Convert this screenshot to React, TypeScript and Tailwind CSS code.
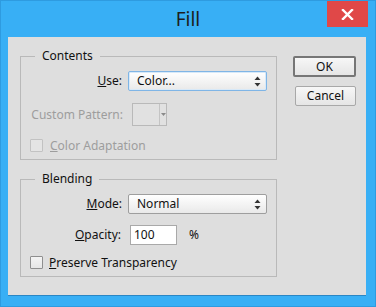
import React from "react";

function Arrows() {
  return (
    <svg width="7" height="11" viewBox="0 0 7 11" className="block">
      <path d="M3.5 0.5 L6.5 4 L0.5 4 Z" fill="#333" />
      <path d="M0.5 7 L6.5 7 L3.5 10.5 Z" fill="#333" />
    </svg>
  );
}

function Select({ text, focused }: { text: string; focused?: boolean }) {
  return (
    <div
      className={
        "w-[139px] h-[20px] rounded-[2px] border flex items-center pl-[8px] pr-[5px] bg-gradient-to-b from-[#ffffff] to-[#e9e9e9] " +
        (focused ? "border-[#7fb5e6] shadow-[inset_0_0_0_1px_#d8e9f8]" : "border-[#9e9e9e]")
      }
    >
      <span className="flex-1 text-[#111] leading-none">{text}</span>
      <Arrows />
    </div>
  );
}

function Legend({ text }: { text: string }) {
  return (
    <span className="absolute left-[14px] top-[-9px] px-[7px] bg-[#dedede] leading-[16px] text-[#111]">
      {text}
    </span>
  );
}

export default function App() {
  return (
    <div className="w-[376px] h-[307px] bg-[#38aff5] border border-[#2e9be0] flex flex-col relative font-['Segoe_UI','Noto_Sans',sans-serif] text-[12px] text-[#111]">
      <div className="h-[36px] flex items-center justify-center">
        <span className="text-[19px] text-[#1d1d1d] leading-none mt-[1px]">Fill</span>
      </div>
      <div className="absolute left-[326px] top-0 w-[41px] h-[26px] bg-[#e04848] flex items-center justify-center">
        <svg width="13" height="11" viewBox="0 0 13 11">
          <path d="M2 1 L11 10 M11 1 L2 10" stroke="#fff" strokeWidth="2.4" strokeLinecap="square" />
        </svg>
      </div>
      <div className="ml-[7px] mr-[9px] h-[259px] bg-[#dedede] border-b border-[#2a86c4] flex pl-[12px] pt-[19px]">
        <div className="w-[257px] flex flex-col gap-[19px]">
          {/* Contents */}
          <div className="relative h-[104px] border border-[#b9b9b9] pt-[14px]">
            <Legend text="Contents" />
            <div className="flex items-center h-[20px]">
              <span className="w-[101px] text-right">
                <span className="underline">U</span>se:
              </span>
              <div className="ml-[6px]">
                <Select text="Color..." focused />
              </div>
            </div>
            <div className="flex items-center h-[23px] mt-[12px]">
              <span className="w-[102px] text-right text-[#9d9d9d]">Custom Pattern:</span>
              <div className="ml-[9px] w-[35px] h-[23px] border border-[#b9b9b9] bg-[#e1e1e1] flex">
                <div className="flex-1" />
                <div className="w-[7px] border-l border-[#c4c4c4] flex items-center justify-center">
                  <svg width="5" height="3" viewBox="0 0 5 3">
                    <path d="M0 0 L5 0 L2.5 3 Z" fill="#8a8a8a" />
                  </svg>
                </div>
              </div>
            </div>
            <div className="flex items-center h-[13px] mt-[13px] pl-[9px]">
              <div className="w-[13px] h-[13px] border border-[#c2c2c2] rounded-[1px] bg-[#e4e4e4]" />
              <span className="ml-[7px] text-[#9d9d9d]">
                <span className="underline">C</span>olor Adaptation
              </span>
            </div>
          </div>
          {/* Blending */}
          <div className="relative h-[98px] border border-[#b9b9b9] pt-[14px]">
            <Legend text="Blending" />
            <div className="flex items-center h-[20px]">
              <span className="w-[101px] text-right">
                <span className="underline">M</span>ode:
              </span>
              <div className="ml-[6px]">
                <Select text="Normal" />
              </div>
            </div>
            <div className="flex items-center h-[20px] mt-[11px]">
              <span className="w-[100px] text-right">
                <span className="underline">O</span>pacity:
              </span>
              <div className="ml-[9px] w-[47px] h-[20px] border border-[#a9a9a9] bg-white flex items-center pl-[3px]">
                100
              </div>
              <span className="ml-[12px]">%</span>
            </div>
            <div className="flex items-center h-[13px] mt-[11px] pl-[9px]">
              <div className="w-[13px] h-[13px] border border-[#8f8f8f] rounded-[1px] bg-gradient-to-b from-[#f4f4f4] to-[#e6e6e6]" />
              <span className="ml-[6px]">
                <span className="underline">P</span>reserve Transparency
              </span>
            </div>
          </div>
        </div>
        <div className="ml-[16px] flex flex-col">
          <div className="w-[63px] h-[21px] border-2 border-[#767676] rounded-[2px] bg-gradient-to-b from-[#f7f7f7] to-[#e5e5e5] flex items-center justify-center leading-none">
            OK
          </div>
          <div className="ml-[2px] mt-[9px] w-[61px] h-[20px] border border-[#a8a8a8] rounded-[2px] bg-gradient-to-b from-[#f7f7f7] to-[#e5e5e5] flex items-center justify-center leading-none">
            Cancel
          </div>
        </div>
      </div>
    </div>
  );
}
